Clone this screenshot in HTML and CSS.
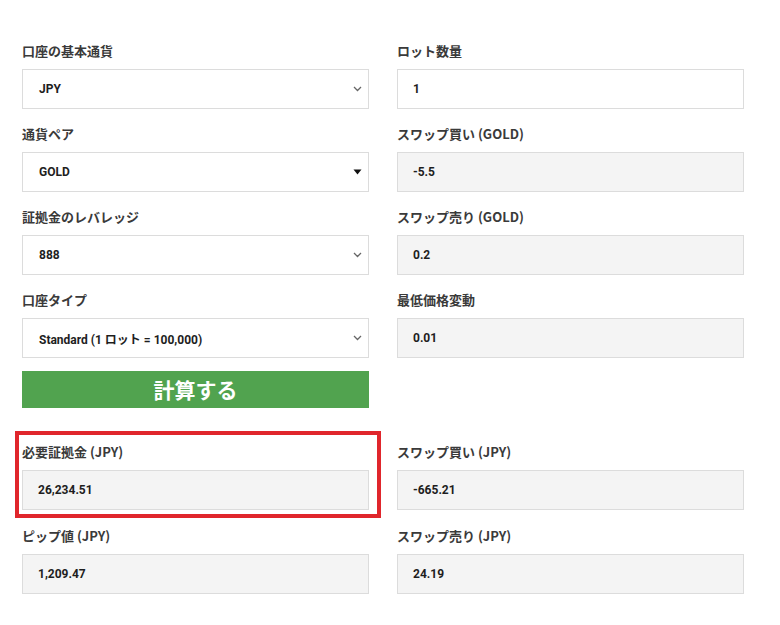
FILE: index.html
```html
<!DOCTYPE html>
<html lang="ja">
<head>
<meta charset="utf-8">
<link rel="stylesheet" href="styles.css">
</head>
<body>
<div class="page">
  <div class="form">
    <div class="col">
      <div class="field">
        <div class="label">口座の基本通貨</div>
        <div class="box select">JPY<svg class="chev" width="9" height="6" viewBox="0 0 9 6"><path d="M1 1l3.5 3.5L8 1" fill="none" stroke="#666" stroke-width="1.3"/></svg></div>
      </div>
      <div class="field">
        <div class="label">通貨ペア</div>
        <div class="box select">GOLD<svg class="tri" width="9" height="6" viewBox="0 0 9 6"><path d="M0.5 0.5h8L4.5 5.5z" fill="#111"/></svg></div>
      </div>
      <div class="field">
        <div class="label">証拠金のレバレッジ</div>
        <div class="box select">888<svg class="chev" width="9" height="6" viewBox="0 0 9 6"><path d="M1 1l3.5 3.5L8 1" fill="none" stroke="#666" stroke-width="1.3"/></svg></div>
      </div>
      <div class="field">
        <div class="label">口座タイプ</div>
        <div class="box select">Standard (1 ロット = 100,000)<svg class="chev" width="9" height="6" viewBox="0 0 9 6"><path d="M1 1l3.5 3.5L8 1" fill="none" stroke="#666" stroke-width="1.3"/></svg></div>
      </div>
      <button class="calc">計算する</button>
    </div>
    <div class="col">
      <div class="field">
        <div class="label">ロット数量</div>
        <div class="box">1</div>
      </div>
      <div class="field">
        <div class="label">スワップ買い (GOLD)</div>
        <div class="box ro">-5.5</div>
      </div>
      <div class="field">
        <div class="label">スワップ売り (GOLD)</div>
        <div class="box ro">0.2</div>
      </div>
      <div class="field">
        <div class="label">最低価格変動</div>
        <div class="box ro">0.01</div>
      </div>
    </div>
  </div>
  <div class="results">
    <div class="field highlight">
      <div class="label">必要証拠金 (JPY)</div>
      <div class="box ro">26,234.51</div>
    </div>
    <div class="field">
      <div class="label">スワップ買い (JPY)</div>
      <div class="box ro">-665.21</div>
    </div>
    <div class="field">
      <div class="label">ピップ値 (JPY)</div>
      <div class="box ro">1,209.47</div>
    </div>
    <div class="field">
      <div class="label">スワップ売り (JPY)</div>
      <div class="box ro">24.19</div>
    </div>
  </div>
</div>
</body>
</html>
```
FILE: styles.css
```css
* { box-sizing: border-box; }
html, body { margin: 0; padding: 0; background: #fff; }
body {
  font-family: Roboto, "Noto Sans CJK JP", sans-serif;
  color: #222;
}
.page {
  width: 780px;
  padding: 42px 0 0 22px;
}
.form {
  display: grid;
  grid-template-columns: 347px 347px;
  column-gap: 28px;
  align-items: start;
}
.col { display: flex; flex-direction: column; }
.field { margin-bottom: 16px; }
.label {
  font-family: "Noto Sans CJK JP", Roboto, sans-serif;
  font-size: 13px;
  line-height: 17px;
  font-weight: 700;
  color: #3a3a3a;
  margin-bottom: 10px;
}
.box {
  height: 40px;
  border: 1px solid #dcdcdc;
  background: #fff;
  padding: 0 15px;
  display: flex;
  align-items: center;
  font-size: 12px;
  font-weight: 700;
  color: #1e1e1e;
}
.select { padding: 0 6px 0 16px; justify-content: space-between; }
.select svg { flex: none; }
.ro { background: #f4f4f4; }
.calc {
  margin-top: -3px;
  height: 37px;
  border: none;
  background: #51a34f;
  color: #fff;
  font-family: "Noto Sans CJK JP", sans-serif;
  font-size: 21px;
  font-weight: 700;
  padding: 0;
  cursor: pointer;
  line-height: 37px;
}
.results {
  margin-top: 35px;
  display: grid;
  grid-template-columns: 347px 347px;
  column-gap: 28px;
}
.results .field { margin-bottom: 17px; }
.highlight { position: relative; }
.highlight::after {
  content: "";
  position: absolute;
  top: -12px;
  left: -7px;
  right: -12px;
  bottom: -8px;
  border: 4px solid #e0262c;
  pointer-events: none;
}
```
